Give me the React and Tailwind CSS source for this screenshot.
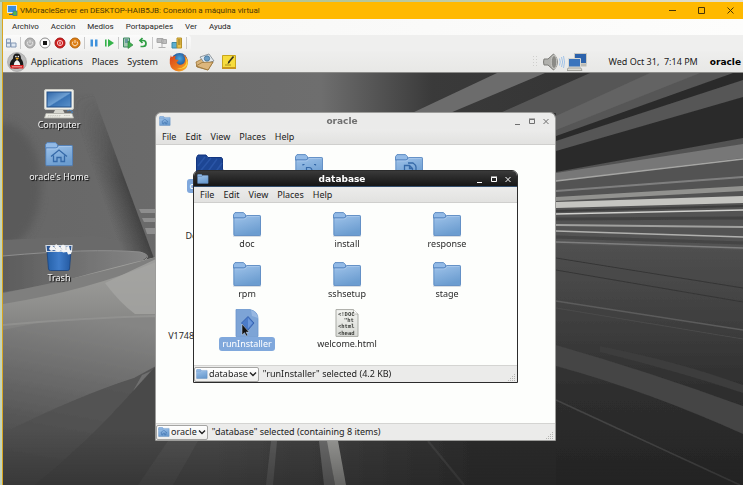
const HOST_MENU = ["Archivo", "Acción", "Medios", "Portapapeles", "Ver", "Ayuda"];
const WINDOW_MENU = ["File", "Edit", "View", "Places", "Help"];

const HOME_FILES = [
  { name: "database", kind: "open", selected: true },
  { name: "Desktop", kind: "desktop" },
  { name: "Documents", kind: "documents" },
  { name: "Downloads", kind: "folder" },
  { name: "Music", kind: "folder" },
  { name: "Pictures", kind: "folder" },
  { name: "Public", kind: "folder" },
  { name: "Templates", kind: "folder" },
  { name: "Videos", kind: "folder" },
  { name: "V17489-01_1of2.zip", kind: "folder" },
];

const DATABASE_FILES = [
  { name: "doc", kind: "folder" },
  { name: "install", kind: "folder" },
  { name: "response", kind: "folder" },
  { name: "rpm", kind: "folder" },
  { name: "sshsetup", kind: "folder" },
  { name: "stage", kind: "folder" },
  { name: "runInstaller", kind: "program", selected: true },
  { name: "welcome.html", kind: "html" },
];

function SharedGradients() {
  return (
    <svg className="absolute size-0" aria-hidden="true">
      <defs>
        <linearGradient id="folder" x1="0" y1="0" x2="0.4" y2="1">
          <stop offset="0" stopColor="#9fc3ea" />
          <stop offset="1" stopColor="#6c9dd0" />
        </linearGradient>
        <linearGradient id="screen" x1="0" y1="0" x2="1" y2="1">
          <stop offset="0" stopColor="#2f66a8" />
          <stop offset="0.5" stopColor="#6d9fd2" />
          <stop offset="0.55" stopColor="#3a74b5" />
          <stop offset="1" stopColor="#5b92cb" />
        </linearGradient>
        <linearGradient id="paper" x1="0" y1="0" x2="0" y2="1">
          <stop offset="0" stopColor="#f2f3f0" />
          <stop offset="1" stopColor="#d9dbd6" />
        </linearGradient>
        <linearGradient id="bin" x1="0" y1="0" x2="1" y2="0">
          <stop offset="0" stopColor="#2560a8" />
          <stop offset="0.5" stopColor="#3f7cc9" />
          <stop offset="1" stopColor="#2459a0" />
        </linearGradient>
        <radialGradient id="foxglobe" cx="0.5" cy="0.35" r="0.6">
          <stop offset="0" stopColor="#4aa6dd" />
          <stop offset="1" stopColor="#14377f" />
        </radialGradient>
        <linearGradient id="foxtail" x1="0" y1="0" x2="1" y2="1">
          <stop offset="0" stopColor="#d8401a" />
          <stop offset="0.6" stopColor="#ec7a1c" />
          <stop offset="1" stopColor="#fbc12f" />
        </linearGradient>
      </defs>
    </svg>
  );
}

function FolderIcon({ kind = "folder", className = "h-[25px] w-[29px]" }) {
  if (kind === "open") {
    return (
      <svg viewBox="0 0 29 25" className={className} aria-hidden="true">
        <path d="M1.5 23V3.5L3 1h8l2 2.500h13.500l1 1.500V15l1 2-1 6.500H2z" fill="#1d4694" stroke="#12357f" />
        <path d="M3 12 10 3M3 20 16 4M9 23 22 5M17 23 27 9" stroke="#2a55a6" strokeWidth="1.500" />
      </svg>
    );
  }
  return (
    <svg viewBox="0 0 29 25" className={className} aria-hidden="true">
      <path d="M.5 6V2.700L2 .6h8.500l2 2.100V6z" fill="#93bae6" stroke="#5686c0" strokeWidth="0.9" />
      <path d="M0 24h28" stroke="#7f8792" strokeWidth="0.8" opacity="0.5" />
      <path d="M.8 6h9.700q2 0 3-2.500h13.300q.7 0 .7.7v18.500q0 .9-.9.9H1.700q-.9 0-.9-.9z" fill="url(#folder)" stroke="#4d7fbc" strokeWidth="0.8" />
      <path d="M1.800 7h9.200q2 0 3-2.500h12.300" fill="none" stroke="#b3cfee" strokeWidth="0.6" />
      {kind === "home" && (
        <path d="M6 14.500 14 8l8 6.500M8.500 13.500v6H12v-4h4v4h3.500v-6" fill="none" stroke="#3569a8" strokeWidth="1.300" />
      )}
      {kind === "desktop" && (
        <path d="M8 10v1.500M8 10.500h1.500M19 10.500h1.500M20.500 10v1.500M11.500 20v-6.500H14q3 0 3 3.500v3" fill="none" stroke="#3569a8" strokeWidth="1.200" />
      )}
      {kind === "documents" && (
        <path d="M9.500 19v-7.500h5l3 3v8h-8zM14.500 11.500v3h3M13 9h5q3 2 3 4v8" fill="none" stroke="#3569a8" strokeWidth="1.300" />
      )}
    </svg>
  );
}

function ProgramIcon() {
  return (
    <svg viewBox="0 0 24 28" className="h-7 w-6" aria-hidden="true">
      <path d="M1 .5h14q8 2 8 9v18H1z" fill="#7da4d6" stroke="#6a95cd" strokeWidth="0.8" />
      <path d="m16 1 1 6 6 2q-1-6-7-8z" fill="#98b8e2" />
      <path d="m13 7.500 6 6.500-6 7-6.500-7z" fill="#4c7cc9" stroke="#2d58a8" strokeWidth="0.8" />
      <path d="m13 9 4.500 5-4.500 5.500z" fill="#6b97da" />
      <path d="M7 15v11l2.500-2.300L11.200 27l1.500-.8-1.600-3.100h3z" fill="#111" stroke="#cdd8e8" strokeWidth="0.5" />
    </svg>
  );
}

function HtmlIcon() {
  return (
    <svg viewBox="0 0 24 28" className="h-7 w-6" aria-hidden="true">
      <path d="M1 .6h17.500L23 5v22.400H1z" fill="url(#paper)" stroke="#a9aba5" />
      <path d="M18.500.6V5H23" fill="#fff" stroke="#a9aba5" strokeWidth="0.8" />
      <g fontFamily="DejaVu Sans Mono, monospace" fontWeight="700" fontSize="5.500" fill="#3b3d39">
        <text x="3" y="6.500">&lt;!DOC</text>
        <text x="9" y="13">&quot;ht</text>
        <text x="3" y="19">&lt;html</text>
        <text x="3" y="25.500">&lt;head</text>
      </g>
    </svg>
  );
}

function FileIcon({ kind }) {
  if (kind === "program") return <ProgramIcon />;
  if (kind === "html") return <HtmlIcon />;
  return <FolderIcon kind={kind} />;
}

function FileGrid({ files }) {
  return (
    <ul className="grid grow auto-rows-[42px] grid-cols-[repeat(3,100px)] content-start gap-y-2 overflow-hidden bg-[#fdfefc] px-[3px] pt-1.5">
      {files.map((file) => (
        <li key={file.name} className="flex flex-col items-center">
          <span className="flex h-7 items-end">
            <FileIcon kind={file.kind} />
          </span>
          <span
            className={
              file.selected
                ? "rounded-[3px] bg-[#80a8dc] px-[3px] leading-[14px] whitespace-nowrap text-white"
                : "px-[3px] leading-[14px] whitespace-nowrap text-[#2a2a2a]"
            }
          >
            {file.name}
          </span>
        </li>
      ))}
    </ul>
  );
}

function WindowButtons() {
  const shapes = [
    { label: "Minimize", d: "M2 8.500h5" },
    { label: "Maximize", d: "M2.500 3.500h5v4h-5zM2 3h6" },
    { label: "Close", d: "m2.500 3 5 5m0-5-5 5" },
  ];
  return (
    <div className="flex items-center gap-1">
      {shapes.map((shape) => (
        <button key={shape.label} aria-label={shape.label} className="size-2.5">
          <svg viewBox="0 0 10 10" className="size-2.5" fill="none" stroke="currentColor">
            <path d={shape.d} />
          </svg>
        </button>
      ))}
    </div>
  );
}

function FileWindow({ title, icon, files, status, active, className }) {
  return (
    <section aria-label={title} className={className}>
      <header
        className={
          active
            ? "flex h-4 shrink-0 items-center border-b border-[#35506f] bg-linear-to-b from-[#3a3a3a] to-[#161616] pr-1 pl-[3px] text-white"
            : "flex h-4 shrink-0 items-center bg-[#ebebea] pr-1 pl-[3px] text-[#707070]"
        }
      >
        <FolderIcon kind={icon} className="h-2.5 w-3" />
        <h2 className="grow text-center font-['DejaVu_Sans',sans-serif] leading-4 font-bold">{title}</h2>
        <WindowButtons />
      </header>
      <nav className="flex h-4 shrink-0 items-center gap-[9px] border-b border-[#cfcfcd] bg-linear-to-b from-[#ececeb] to-[#e2e2e0] px-1.5 text-[#1c1c1c]">
        {WINDOW_MENU.map((item) => (
          <button key={item}>{item}</button>
        ))}
      </nav>
      <FileGrid files={files} />
      <footer className="flex h-[17px] shrink-0 items-center gap-1 border-t border-[#d4d4d2] bg-[#ebebea] text-[#1c1c1c]">
        <label className="flex h-[15px] items-center gap-px rounded-xs border border-[#a5a5a3] bg-linear-to-b from-white to-[#eeeeec] px-px">
          <FolderIcon kind={icon} className="h-2.5 w-3" />
          <select aria-label={"Location of " + title} className="field-sizing-content appearance-none bg-transparent leading-3 outline-none">
            <option>{title}</option>
          </select>
          <svg viewBox="0 0 8 6" className="h-1.5 w-2" fill="none" stroke="#222" strokeWidth="1.400" aria-hidden="true">
            <path d="m1 1.500 3 3 3-3" />
          </svg>
        </label>
        <p className="grow leading-3">{status}</p>
        <svg viewBox="0 0 8 8" className="mr-px size-2 self-end" fill="#b5b5b2" aria-hidden="true">
          <path d="M6 0h1v1H6zM4 2h1v1H4zM6 2h1v1H6zM2 4h1v1H2zM4 4h1v1H4zM6 4h1v1H6zM0 6h1v1H0zM2 6h1v1H2zM4 6h1v1H4zM6 6h1v1H6z" />
        </svg>
      </footer>
    </section>
  );
}

function Wallpaper() {
  return (
    <svg viewBox="3 73 740 412" preserveAspectRatio="none" className="absolute inset-0 size-full" aria-hidden="true">
      <defs>
        <linearGradient id="base" x1="0" y1="0" x2="1" y2="0">
          <stop offset="0" stopColor="#676767" />
          <stop offset="0.43" stopColor="#6e6e6e" />
          <stop offset="0.58" stopColor="#3a3a3a" />
          <stop offset="1" stopColor="#303030" />
        </linearGradient>
        <linearGradient id="fold" gradientUnits="userSpaceOnUse" x1="98" y1="184" x2="124" y2="175">
          <stop offset="0" stopColor="#474747" stopOpacity="0" />
          <stop offset="1" stopColor="#434343" />
        </linearGradient>
        <linearGradient id="foldfade" gradientUnits="userSpaceOnUse" x1="0" y1="93" x2="0" y2="180">
          <stop offset="0" stopColor="#000000" />
          <stop offset="1" stopColor="#ffffff" />
        </linearGradient>
        <mask id="foldmask" maskUnits="userSpaceOnUse" x="3" y="73" width="200" height="260">
          <rect x="3" y="73" width="200" height="260" fill="url(#foldfade)" />
        </mask>
        <linearGradient id="lens" x1="0" y1="0" x2="1" y2="0">
          <stop offset="0" stopColor="#5c5c5c" />
          <stop offset="0.6" stopColor="#747474" />
          <stop offset="1" stopColor="#858585" />
        </linearGradient>
        <linearGradient id="sheen" x1="0" y1="0" x2="0" y2="1">
          <stop offset="0" stopColor="#a2a29f" />
          <stop offset="0.35" stopColor="#8e8e8c" />
          <stop offset="1" stopColor="#5a5a5a" />
        </linearGradient>
        <linearGradient id="slope" gradientUnits="userSpaceOnUse" x1="90" y1="318" x2="60" y2="480">
          <stop offset="0" stopColor="#858584" />
          <stop offset="0.4" stopColor="#6a6a6a" />
          <stop offset="0.65" stopColor="#585858" />
          <stop offset="1" stopColor="#404040" />
        </linearGradient>
        <linearGradient id="floor" gradientUnits="userSpaceOnUse" x1="60" y1="0" x2="743" y2="0">
          <stop offset="0" stopColor="#484848" />
          <stop offset="0.2" stopColor="#4a4a4a" />
          <stop offset="0.4" stopColor="#3d3d3d" />
          <stop offset="0.6" stopColor="#2c2c2c" />
          <stop offset="1" stopColor="#252525" />
        </linearGradient>
        <linearGradient id="rightfloor" x1="0" y1="0" x2="0" y2="1">
          <stop offset="0" stopColor="#505050" />
          <stop offset="0.35" stopColor="#3d3d3d" />
          <stop offset="0.6" stopColor="#2e2e2e" />
          <stop offset="1" stopColor="#262626" />
        </linearGradient>
        <linearGradient id="bottomshade" x1="0" y1="0" x2="0" y2="1">
          <stop offset="0" stopColor="#202020" stopOpacity="0" />
          <stop offset="1" stopColor="#202020" stopOpacity="0.45" />
        </linearGradient>
        <filter id="soft">
          <feGaussianBlur stdDeviation="0.7" />
        </filter>
        <filter id="softer">
          <feGaussianBlur stdDeviation="4" />
        </filter>
      </defs>
      <rect x="3" y="73" width="740" height="412" fill="url(#base)" />
      <ellipse cx="3" cy="185" rx="38" ry="62" fill="#545454" opacity="0.7" filter="url(#softer)" />

      <g filter="url(#soft)">
        <path d="M3 240 95 236 146 246 156 262v60H3z" fill="#6b6b6b" />
        <path d="M93 93 155 261 110 261 50 90z" fill="url(#fold)" mask="url(#foldmask)" />
        <path d="M139 209h17v4h-15zM142 218h14v4h-12zM145 228h11v6h-9z" fill="#8e8e8e" />
        <path d="M3 256Q90 248 140 252q12 3 3 8Q90 280 3 292z" fill="url(#lens)" />
        <path d="M3 256Q90 248 140 252q12 3 5 8" fill="none" stroke="#8e8e8e" />
        <path d="M3 300Q60 280 156 257V400H3z" fill="url(#sheen)" />
        <path d="M3 293Q90 276 156 257v5Q90 290 3 304z" fill="#7f7f7e" />
        <path d="M105 283q15 20 30 31h21v-55z" fill="#a5a5a3" opacity="0.8" />
        <path d="M3 330Q80 312 156 318v90L40 485H3z" fill="url(#slope)" />
        <path d="M3 325Q80 318 156 316" fill="none" stroke="#a3a3a1" strokeWidth="2" opacity="0.4" />
        <path d="M3 433Q80 395 134 378L156 366V485H3z" fill="#505050" opacity="0.85" />
        <path d="M35 485Q90 440 134 390L156 366V441H743V485z" fill="url(#floor)" />
        <path d="m133 391 9-16 9-4z" fill="#757575" opacity="0.8" />
      </g>

      <g filter="url(#soft)">
        <path d="M497 73 412 113H450L545 73z" fill="#6c6c6c" />
        <path d="M590 73 500 113H556V150L735 73z" fill="#575757" />
        <path d="M650 73 556 116v14L700 73z" fill="#636363" />
        <path d="M743 73h-10L556 136v40L743 140z" fill="#2b2b2b" />
        <path d="M743 80 556 141v10L743 97z" fill="#565656" />
        <path d="M556 172 743 138V260H556z" fill="#535353" />
        <path d="M556 173 743 144v14L556 181z" fill="#777777" />
        <path d="m556 181 187-22" stroke="#a6a6a4" strokeWidth="1.600" />
        <path d="m556 191 187-14" stroke="#7f7f7f" strokeWidth="2" />
        <path d="M556 197 743 186v5L556 201z" fill="#92928f" />
        <path d="M556 202 743 196v7L556 208z" fill="#c5c5c1" />
        <path d="m556 211 187-5" stroke="#3e3e3e" strokeWidth="2" />
        <path d="m556 214 187-4" stroke="#d0d0cd" strokeWidth="1.600" />
        <path d="m556 219 187-1" stroke="#434343" strokeWidth="3" />
        <path d="m556 225 187 2" stroke="#a0a09e" strokeWidth="1.800" />
        <path d="m556 231 187 6" stroke="#b0b0ae" strokeWidth="1.600" />
        <path d="m556 237 187 6" stroke="#444444" strokeWidth="3" />
        <path d="m556 242 187 6" stroke="#7e7e7e" strokeWidth="1.600" />
        <path d="M556 244 743 250V485H556z" fill="url(#rightfloor)" />
        <path d="m556 258 187 30M556 270l187 32" stroke="#353535" />
        <path d="m556 301 187 29" stroke="#5c5c5c" strokeWidth="1.600" />
        <path d="m556 308 187 31" stroke="#4a4a4a" />
        <path d="M556 345Q650 372 743 406v28Q650 392 556 366z" fill="#444444" />
        <path d="M600 346Q680 362 743 385v8Q680 372 600 352z" fill="#3c3c3c" />
        <path d="m556 400 184 85" stroke="#444444" strokeWidth="1.500" />
      </g>

      <g filter="url(#soft)">
        <path d="M198 441h-30l-30 44h35z" fill="#5a5a5a" opacity="0.5" />
        <path d="M271 441h6l-4 44h-7z" fill="#666666" opacity="0.7" />
        <path d="M319 441h9l7 44h-11z" fill="#6c6c6c" />
        <path d="M327 441h11l8 44h-11z" fill="#9b9b98" />
        <path d="m428 441 36 44" stroke="#414141" strokeWidth="2" />
      </g>
      <rect x="3" y="430" width="740" height="55" fill="url(#bottomshade)" />
    </svg>
  );
}

function ComputerIcon() {
  return (
    <svg viewBox="0 0 32 30" className="h-[30px] w-8" aria-hidden="true">
      <rect x="1.500" y="0.500" width="29" height="20" rx="1.500" fill="#f0f0ea" stroke="#c9c9c2" />
      <rect x="4" y="3" width="24" height="15" fill="url(#screen)" stroke="#234f86" />
      <path d="M12 21h8l1.500 3h-11z" fill="#d6d6cf" />
      <path d="M3 24.500h26l1.500 4.500H1.500z" fill="#ecece5" stroke="#b9b9b1" strokeWidth="0.8" />
      <path d="M5 26.500h13M4.500 28h13M21 26.500h6" stroke="#c4c4bc" strokeWidth="0.8" strokeDasharray="1.500 0.700" />
      <path d="M24 22q3-1.500 5 0t-1 2" fill="none" stroke="#4d84bb" />
    </svg>
  );
}

function TrashIcon() {
  return (
    <svg viewBox="0 0 28 28" className="size-7" aria-hidden="true">
      <path d="M2 8h24l-1.500 18q-.2 1.500-2 1.500h-17q-1.800 0-2-1.500z" fill="url(#bin)" stroke="#1b447f" strokeWidth="0.8" />
      <path d="M1 2.500h26l-.6 6H1.600z" fill="#2a5595" stroke="#d3dbe4" strokeWidth="1.200" />
      <path d="m4 6 2-4 3 2 2-3 4 3 3-2.500 3 2 3-.5 1 4 2 1-1 3-3 .5-1-2.500-4 .5-2-2-3 1.500L9 7 6 8z" fill="#f3f4f5" />
      <path d="m9 4 2 2M15 4l2 2.500M21 4v3" stroke="#b7bcc2" strokeWidth="0.8" />
    </svg>
  );
}

function DesktopIcon({ label, children, className }) {
  return (
    <figure className={className}>
      {children}
      <figcaption className="leading-3 text-[#f4f4f4] [text-shadow:1px_1px_1px_#000]">{label}</figcaption>
    </figure>
  );
}

function Desktop() {
  return (
    <main className="relative grow overflow-hidden bg-[#4a4a4a]">
      <Wallpaper />
      <div className="relative flex w-28 flex-col pt-4">
        <DesktopIcon label="Computer" className="flex h-[53px] flex-col items-center">
          <ComputerIcon />
        </DesktopIcon>
        <DesktopIcon label="oracle's Home" className="flex h-[101px] flex-col items-center gap-1">
          <FolderIcon kind="home" />
        </DesktopIcon>
        <DesktopIcon label="Trash" className="flex flex-col items-center gap-px">
          <TrashIcon />
        </DesktopIcon>
      </div>
      <FileWindow
        title="oracle"
        icon="home"
        files={HOME_FILES}
        status={'"database" selected (containing 8 items)'}
        className="absolute top-[39px] left-[152px] flex h-[329px] w-[401px] flex-col overflow-hidden rounded-t-md border border-[#9d9d9b]"
      />
      <FileWindow
        active
        title="database"
        icon="folder"
        files={DATABASE_FILES}
        status={'"runInstaller" selected (4.2 KB)'}
        className="absolute top-[97px] left-[190px] flex h-[213px] w-[325px] flex-col overflow-hidden rounded-t-md border border-[#2c2c2c]"
      />
    </main>
  );
}

function HostTitleBar() {
  return (
    <header className="flex h-[17px] items-center bg-[#ffb900] pr-2 pl-1 text-[#4a3608]">
      <svg viewBox="0 0 11 11" className="mr-0.5 size-[11px]" aria-hidden="true">
        <rect x="0.500" y="0.500" width="9" height="7" fill="#3b8ede" stroke="#d9e6f2" />
        <path d="M2 9.500h4V8" stroke="#2a5c8a" fill="none" />
        <rect x="6" y="6" width="4" height="4.500" fill="#53b848" stroke="#2f6fb0" strokeWidth="0.700" />
      </svg>
      <h1 className="grow">VMOracleServer en DESKTOP-HAIB5JB: Conexión a máquina virtual</h1>
      <div className="flex items-center gap-5">
        <button aria-label="Minimizar">
          <svg viewBox="0 0 9 9" className="size-[9px]" fill="none" stroke="currentColor">
            <path d="M1 4.500h7" />
          </svg>
        </button>
        <button aria-label="Maximizar">
          <svg viewBox="0 0 9 9" className="size-[9px]" fill="none" stroke="currentColor">
            <path d="M1.500 1.500h6v6h-6z" />
          </svg>
        </button>
        <button aria-label="Cerrar">
          <svg viewBox="0 0 9 9" className="size-[9px]" fill="none" stroke="currentColor">
            <path d="m1.500 1.500 6 6m0-6-6 6" />
          </svg>
        </button>
      </div>
    </header>
  );
}

function ToolButton({ label, children }) {
  return (
    <button aria-label={label} className="size-3">
      <svg viewBox="0 0 12 12" className="size-3" fill="none">
        {children}
      </svg>
    </button>
  );
}

function ToolSeparator() {
  return <span className="h-3 w-px bg-[#c9c9c9]" />;
}

function HostToolbar() {
  return (
    <div className="flex h-4 items-center bg-[#efefee]">
      <div className="flex h-4 items-center gap-[3px] rounded-r-sm bg-linear-to-b from-[#fbfbfb] to-[#f1f1f0] pr-1 pl-0.5">
        <ToolButton label="Ctrl+Alt+Supr">
          <path d="M1.500 2h4v4h-4zM1.500 6h4v4h-4zM6 6h5v4H6z" fill="#dfe8f2" stroke="#8498b5" />
        </ToolButton>
        <ToolSeparator />
        <ToolButton label="Iniciar">
          <circle cx="6" cy="6" r="5" fill="#b4b4b4" stroke="#9b9b9b" />
          <path d="M4 4.500a2.600 2.600 0 1 0 4 0M6 3v3" stroke="#e4e4e4" />
        </ToolButton>
        <ToolButton label="Apagar">
          <circle cx="6" cy="6" r="5" fill="#fafafa" stroke="#8c8c8c" />
          <path d="M4 4h4v4H4z" fill="#141414" />
        </ToolButton>
        <ToolButton label="Cerrar invitado">
          <circle cx="6" cy="6" r="5" fill="#cf1f1f" stroke="#a41616" />
          <circle cx="6" cy="6" r="2.600" stroke="#f7caca" />
          <path d="M6 4.500v3" stroke="#fff" />
        </ToolButton>
        <ToolButton label="Guardar">
          <circle cx="6" cy="6" r="5" fill="#dd7d12" stroke="#b5640c" />
          <path d="M4 4.500a2.600 2.600 0 1 0 4 0M6 3v3" stroke="#fbe3c2" />
        </ToolButton>
        <ToolSeparator />
        <ToolButton label="Pausar">
          <path d="M2.500 2.500h2.500v7H2.500zM7 2.500h2.500v7H7z" fill="#3f92dc" />
        </ToolButton>
        <ToolButton label="Restablecer">
          <path d="M2 2.500h1.600v7H2zM5 2l6 4-6 4z" fill="#35b34a" />
        </ToolButton>
        <ToolSeparator />
        <ToolButton label="Punto de control">
          <path d="M1.500 1h6v9h-6z" fill="#a5c9b2" stroke="#3f8a62" />
          <path d="M3 3h3M3 5h3" stroke="#2f6a8a" />
          <path d="m6 4 5 4-5 3.500z" fill="#3fae4f" stroke="#2a7d3a" strokeWidth="0.600" />
        </ToolButton>
        <ToolButton label="Revertir">
          <path d="M5.500 1 3 3.500 5.500 6M3.500 3.500H6a3 3 0 0 1 0 6H3.500" stroke="#2f9e44" strokeWidth="1.700" />
        </ToolButton>
        <ToolSeparator />
        <ToolButton label="Sesión mejorada">
          <path d="M1 1.500h6v4H1zM5.500 2.500h5v4h-5z" fill="#bdbdbd" stroke="#a8a8a8" />
          <path d="M6 7v3M2.500 10.500h7" stroke="#b0b0b0" />
        </ToolButton>
        <ToolButton label="Compartir">
          <path d="M1 5.500h5v5.500H1z" fill="#5aaed0" stroke="#3b8aa8" />
          <path d="M6 1h4.500v10H6z" fill="#e9c24a" stroke="#b8922a" />
          <path d="M7 3h2.500M7 5h2.500M7 7h2.500" stroke="#8a6a18" />
        </ToolButton>
        <ToolSeparator />
      </div>
    </div>
  );
}

function GnomePanel() {
  return (
    <div className="flex h-[22px] items-center border-b border-[#8b8b89] bg-linear-to-b from-[#eeeeed] to-[#e8e8e6] pr-0.5 pl-1 text-[#1c1c1c]">
      <svg viewBox="0 0 20 20" className="mr-1 size-5" aria-hidden="true">
        <circle cx="10" cy="10" r="9.500" fill="#bcbcbc" stroke="#9a9a9a" strokeWidth="0.600" />
        <path d="M10 1.500q4 0 4 5 3 4 2 8l-5 2h-4l-4-2q-1-4 3-8 0-5 4-5z" fill="#1b1b1b" />
        <path d="M10 8q4 2 3 7H7q-1-5 3-7z" fill="#f3f3f3" />
        <path d="M8.500 6.200 10 5.400l2 .8-2 1.700z" fill="#f0a81e" />
        <circle cx="8.900" cy="4.600" r="0.800" fill="#fff" />
        <circle cx="11.300" cy="4.600" r="0.800" fill="#fff" />
        <path d="M3.500 13h13v3.500h-13z" fill="#d62323" />
        <path d="M5 14.800h10" stroke="#f6d0d0" strokeWidth="0.800" />
      </svg>
      <nav className="flex items-center gap-[9px]">
        <button>Applications</button>
        <button>Places</button>
        <button>System</button>
      </nav>
      <div className="ml-[11px] flex grow items-center gap-1.5">
        <button aria-label="Firefox">
          <svg viewBox="0 0 20 20" className="size-5">
            <circle cx="10.500" cy="9" r="8" fill="url(#foxglobe)" />
            <path d="M2 3q0 2 1 2 2-1.500 4-.5-2 1.500-.5 3l3 .5q0 1.500-2 2 1 3 4.500 2.800 4.500-.8 4-6.800-.5-2-2-3.500 5 2 5 8.500-1 8-9 8.500Q2 19 .8 11.500.5 6 2 3z" fill="url(#foxtail)" />
            <path d="M16 5q3 5-.5 9-3 3-7.500 2.500 6 2 9.500-2.500 3-5-1.500-9z" fill="#fbd23a" />
          </svg>
        </button>
        <button aria-label="Evolution">
          <svg viewBox="0 0 20 18" className="h-[18px] w-5">
            <path d="m1 9 8-4 9 4-5 8-11-3z" fill="#d9b47a" stroke="#9b7436" strokeWidth="0.800" />
            <path d="m5 4 9-3 5 7-9 3z" fill="#e3e9ee" stroke="#7c868e" strokeWidth="0.800" />
            <circle cx="12" cy="5.500" r="2.700" fill="#6a9dc4" stroke="#38688f" strokeWidth="0.700" />
            <path d="m1 13 6-3.500 11-.5-5 8z" fill="#dcb67c" stroke="#9b7436" strokeWidth="0.800" />
          </svg>
        </button>
        <button aria-label="Gnote">
          <svg viewBox="0 0 16 16" className="size-4">
            <path d="M1.500 1.500h13v12.500h-13z" fill="#f7dc3c" stroke="#c9a51b" />
            <path d="M1 13h14v2H1z" fill="#c9961e" />
            <path d="M4 11h6" stroke="#a88c1c" />
            <path d="m7.500 8.500 5-6" stroke="#3a3520" strokeWidth="1.700" />
            <path d="m6.500 10 1-2.200 1.300 1z" fill="#1a1a1a" />
          </svg>
        </button>
      </div>
      <div className="flex items-center gap-0.5">
        <svg viewBox="0 0 4 12" className="mr-1 h-3 w-1" fill="#cfcfcd" aria-hidden="true">
          <path d="M0 0h1v1H0zM3 0h1v1H3zM0 3h1v1H0zM3 3h1v1H3zM0 6h1v1H0zM3 6h1v1H3zM0 9h1v1H0zM3 9h1v1H3z" />
        </svg>
        <button aria-label="Volume">
          <svg viewBox="0 0 22 18" className="h-[18px] w-[22px]" fill="none">
            <path d="M1 6h4l5.500-5q4 3 4 8t-4 8L5 12H1q-1-3 0-6z" fill="#b0b0ac" stroke="#7c7c78" />
            <ellipse cx="11" cy="9" rx="2.800" ry="6.500" fill="#8a8a86" stroke="#c9c9c5" />
            <path d="M16.500 5.500q1.500 3.500 0 7M18.500 4q2.200 5 0 10M20.500 3q2 6 0 12" stroke="#a3c4e8" />
          </svg>
        </button>
        <button aria-label="Network">
          <svg viewBox="0 0 20 18" className="h-[18px] w-5">
            <path d="M7.500.5h12v10h-12z" fill="#2c62ab" stroke="#c8c8c2" />
            <path d="M10 11h9.500v2.500H10z" fill="#bcbcb6" />
            <path d="M1.500 5.500h12v8.500h-12z" fill="#3a74bd" stroke="#d8d8d2" />
            <path d="M1 15h13l1 2.500H0z" fill="#dcdcd6" stroke="#8c8c86" strokeWidth="0.700" />
          </svg>
        </button>
      </div>
      <time className="ml-[22px] whitespace-pre">Wed Oct 31,  7:14 PM</time>
      <strong className="ml-3 font-['DejaVu_Sans',sans-serif] font-bold text-black">oracle</strong>
    </div>
  );
}

export default function App() {
  return (
    <div className="flex min-h-screen w-full flex-col bg-[#c3d3ba] font-['Noto_Sans','DejaVu_Sans',sans-serif] text-[9px] leading-3">
      <SharedGradients />
      <div className="h-0.5 bg-linear-to-r from-[#a9bf86] via-[#b5c79a] to-[#e4dfcf]" />
      <div className="ml-0.5 flex grow flex-col border-l border-[#d9a520]">
        <div className="font-['Roboto','Noto_Sans',sans-serif] text-[8px]">
          <HostTitleBar />
          <nav className="flex h-4 items-center gap-3 bg-linear-to-r from-[#f6f6f5] to-[#fdfdfc] px-[9px] text-[#262626]">
            {HOST_MENU.map((item) => (
              <button key={item}>{item}</button>
            ))}
          </nav>
          <HostToolbar />
        </div>
        <GnomePanel />
        <Desktop />
      </div>
    </div>
  );
}
